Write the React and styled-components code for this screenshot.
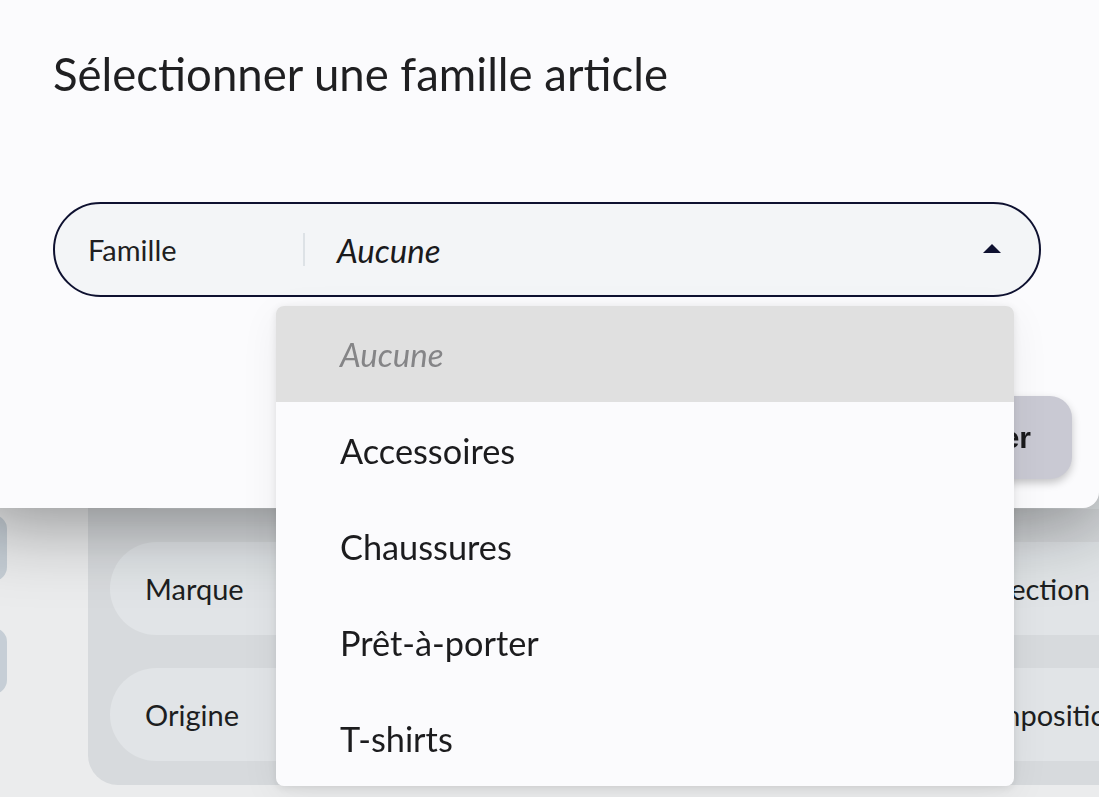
import React from "react";
import styled, { createGlobalStyle } from "styled-components";

const Global = createGlobalStyle`
  html, body {
    margin: 0;
    padding: 0;
    width: 100%;
    height: 100%;
    overflow: hidden;
    background: #fdfdfe;
    font-family: Lato, "Noto Sans", sans-serif;
    color: #1c1c1e;
  }
  * { box-sizing: border-box; }
`;

/* ---------- page behind the dialog ---------- */

const Page = styled.div`
  display: flex;
  align-items: flex-start;
  gap: 81px;
  margin-left: -53px;
  padding-top: 393px;
  min-height: 797px;
`;

const Sidebar = styled.div`
  display: flex;
  flex-direction: column;
  gap: 47px;
  padding-top: 122px;
`;

const SideButton = styled.div`
  width: 60px;
  height: 66px;
  border-radius: 14px;
  background: #d5dde5;
`;

const Card = styled.div`
  width: 1700px;
  flex: none;
  height: 392px;
  border-radius: 30px;
  background: #e8eaed;
  padding: 23px 22px;
  display: grid;
  grid-template-columns: 794px 794px;
  grid-auto-rows: 93px;
  column-gap: 22px;
  row-gap: 33px;
`;

const FieldPill = styled.div`
  display: flex;
  align-items: center;
  border-radius: 47px;
  background: #f2f5f8;
  padding-left: 35px;
  font-size: 29px;
  color: #1f1f22;
  white-space: nowrap;
`;

/* ---------- overlay & dialog ---------- */

const Overlay = styled.div`
  position: fixed;
  inset: 0;
  background: rgba(20, 22, 30, 0.075);
  display: flex;
  align-items: flex-start;
`;

const Dialog = styled.div`
  margin: -30px 0 0 -30px;
  width: calc(100% + 30px);
  background: #fbfbfd;
  border-radius: 0 0 16px 0;
  box-shadow: 0 12px 80px rgba(0, 0, 0, 0.42);
  padding: 76px 27px 29px 83px;
  display: flex;
  flex-direction: column;
`;

const Title = styled.h1`
  margin: 0;
  font-weight: 400;
  font-size: 45.5px;
  line-height: 55px;
  color: #1f1f21;
  letter-spacing: 0;
`;

const SelectWrap = styled.div`
  position: relative;
  margin-top: 101px;
  margin-right: 31px;
`;

const SelectBox = styled.div`
  height: 95px;
  border: 2px solid #0e1130;
  border-radius: 48px;
  background: #f3f5f7;
  display: flex;
  align-items: center;
  padding: 0 38px 0 33px;
`;

const SelectLabel = styled.span`
  width: 215px;
  flex: none;
  font-size: 29px;
  color: #1f1f22;
`;

const Divider = styled.span`
  width: 2px;
  height: 33px;
  background: #dde2e6;
  flex: none;
`;

const SelectValue = styled.span`
  flex: 1;
  margin-left: 32px;
  font-size: 33px;
  font-style: italic;
  color: #1a1a1c;
`;

const Caret = styled.svg`
  width: 18px;
  height: 9px;
  flex: none;
  margin-bottom: 2px;
`;

const Menu = styled.ul`
  position: absolute;
  top: calc(100% + 9px);
  left: 223px;
  width: 738px;
  margin: 0;
  padding: 0;
  list-style: none;
  background: #fbfbfd;
  border-radius: 8px;
  overflow: hidden;
  box-shadow: 0 2px 10px rgba(0, 0, 0, 0.1), 0 10px 40px rgba(0, 0, 0, 0.06);
  z-index: 2;
`;

const MenuItem = styled.li`
  height: 96px;
  display: flex;
  align-items: center;
  padding-left: 64px;
  font-size: ${(p) => (p.$empty ? "33px" : "34.3px")};
  font-style: ${(p) => (p.$empty ? "italic" : "normal")};
  color: ${(p) => (p.$empty ? "#858587" : "#1c1c1e")};
  background: ${(p) => (p.$active ? "#e0e0e0" : "transparent")};
`;

const Actions = styled.div`
  display: flex;
  justify-content: flex-end;
  margin-top: 99px;
`;

const Button = styled.button`
  height: 83px;
  padding: 0 41px;
  border: none;
  border-radius: 22px;
  background: #c9c9d3;
  box-shadow: 0 4px 8px rgba(0, 0, 0, 0.22);
  font-family: "Liberation Sans", Arial, sans-serif;
  font-weight: 700;
  font-size: 30px;
  color: #1a1a1c;
`;

const options = ["Accessoires", "Chaussures", "Prêt-à-porter", "T-shirts"];

export default function App() {
  return (
    <>
      <Global />
      <Page>
        <Sidebar>
          <SideButton />
          <SideButton />
        </Sidebar>
        <Card>
          <FieldPill>Référence</FieldPill>
          <FieldPill>Désignation</FieldPill>
          <FieldPill>Marque</FieldPill>
          <FieldPill>Collection</FieldPill>
          <FieldPill>Origine</FieldPill>
          <FieldPill>Composition</FieldPill>
        </Card>
      </Page>
      <Overlay>
        <Dialog>
          <Title>Sélectionner une famille article</Title>
          <SelectWrap>
            <SelectBox>
              <SelectLabel>Famille</SelectLabel>
              <Divider />
              <SelectValue>Aucune</SelectValue>
              <Caret viewBox="0 0 18 9">
                <path d="M0 9 L9 0 L18 9 Z" fill="#0e1130" />
              </Caret>
            </SelectBox>
            <Menu>
              <MenuItem $empty $active>
                Aucune
              </MenuItem>
              {options.map((o) => (
                <MenuItem key={o}>{o}</MenuItem>
              ))}
            </Menu>
          </SelectWrap>
          <Actions>
            <Button>Valider</Button>
          </Actions>
        </Dialog>
      </Overlay>
    </>
  );
}
